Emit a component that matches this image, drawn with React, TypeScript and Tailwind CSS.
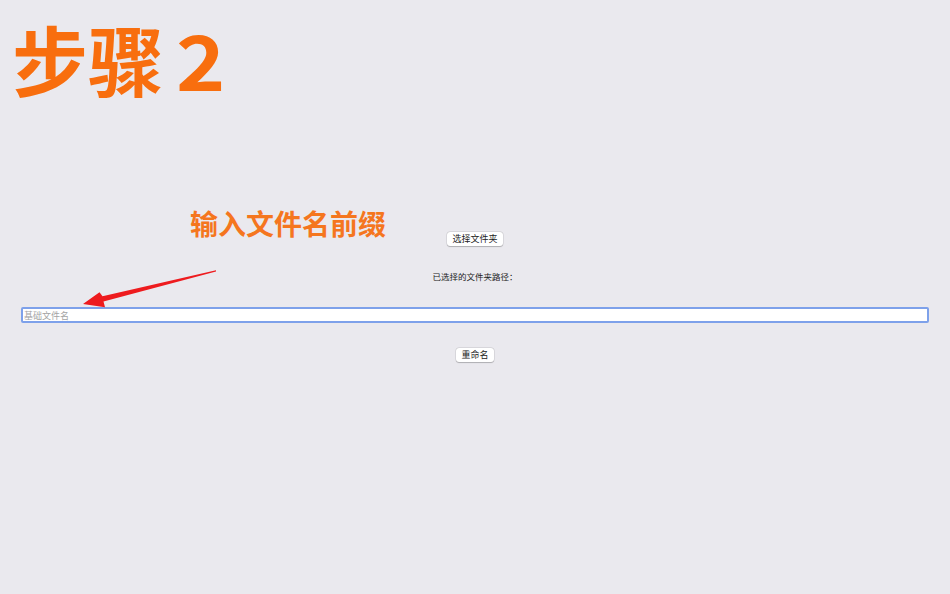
import React from 'react';

const cjk = { fontFamily: '"Noto Sans CJK SC", "Noto Sans", sans-serif' };

const Arrow = () => (
  <svg
    className="absolute left-0 top-0 pointer-events-none"
    width="950"
    height="594"
    viewBox="0 0 950 594"
  >
    <polygon
      points="216,270.2 102.5,296.2 99.5,292.2 83,304 105,307.2 103.5,301.6 216,271.4"
      fill="#ee1b1e"
    />
  </svg>
);

const btn =
  'h-[14px] px-[5px] bg-white rounded-[3px] shadow-[0_0_0_0.5px_rgba(0,0,0,0.12),0_0.5px_1px_rgba(0,0,0,0.2)] text-[9px] leading-[14px] text-[#222]';

const App = () => {
  return (
    <div className="relative w-[950px] h-[594px] bg-[#eae9ee] overflow-hidden" style={cjk}>
      {/* Step annotation overlays */}
      <div className="absolute left-[12px] top-[8px] text-[76px] leading-[100px] font-bold text-[#f86e0e]">
        步骤<span className="ml-[12px] inline-block scale-x-110 origin-left">2</span>
      </div>
      <div className="absolute left-[190px] top-[203px] text-[28px] leading-[40px] font-bold text-[#f5761e]">
        输入文件名前缀
      </div>
      <Arrow />

      {/* App content */}
      <div className="flex flex-col items-center pt-[232px] px-[21px]">
        <button className={btn}>选择文件夹</button>
        <p className="mt-[23px] text-[8.5px] leading-[14px] text-[#222]">已选择的文件夹路径：</p>
        <input
          type="text"
          placeholder="基础文件名"
          className="mt-[24px] w-full h-[16px] bg-white border-2 border-[#7ea1ea] rounded-[2px] px-[1px] text-[9px] leading-[12px] outline-none placeholder:text-[#a3a3a3]"
        />
        <button className={`mt-[25px] ${btn}`}>重命名</button>
      </div>
    </div>
  );
};

export default App;
